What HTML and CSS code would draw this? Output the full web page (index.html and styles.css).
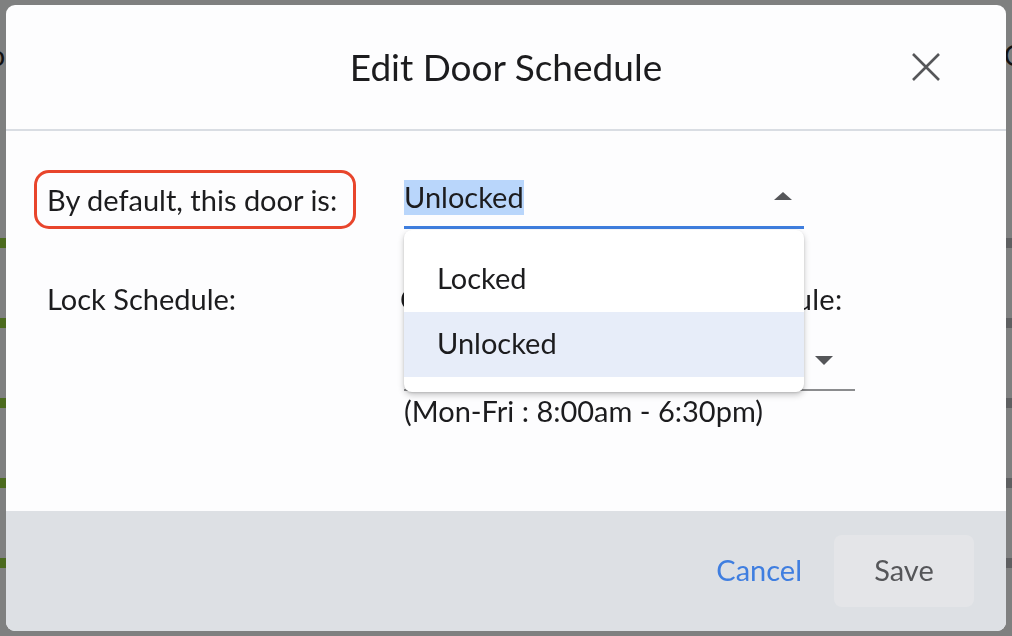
FILE: index.html
```html
<!DOCTYPE html>
<html lang="en">
<head>
<meta charset="utf-8">
<title>Edit Door Schedule</title>
<link rel="stylesheet" href="styles.css">
</head>
<body>
<div class="page">
  <div class="page-top"><span class="frag-left">Lo</span><span class="frag-right">Co</span></div>
  <div class="ticks">
    <div class="tick-row"><i class="tick tick-l"></i><i class="tick tick-r"></i></div>
    <div class="tick-row"><i class="tick tick-l"></i><i class="tick tick-r"></i></div>
    <div class="tick-row"><i class="tick tick-l"></i><i class="tick tick-r"></i></div>
    <div class="tick-row"><i class="tick tick-l"></i><i class="tick tick-r"></i></div>
    <div class="tick-row"><i class="tick tick-l"></i><i class="tick tick-r"></i></div>
  </div>
</div>
<div class="overlay">
  <div class="modal">
    <header class="modal-header">
      <div class="spacer"></div>
      <h1 class="modal-title">Edit Door Schedule</h1>
      <button class="close-btn" aria-label="Close">
        <svg viewBox="0 0 28 28" width="28" height="28"><path d="M1 1 L27 27 M27 1 L1 27" stroke="#555659" stroke-width="2.6" fill="none"/></svg>
      </button>
    </header>
    <div class="modal-body">
      <div class="form-row row-default">
        <div class="label-cell"><span class="label-highlight">By default, this door is:</span></div>
        <div class="field-cell">
          <div class="select-wrap">
            <div class="select select-open">
              <span class="select-value selected-text">Unlocked</span>
              <svg class="arrow" viewBox="0 0 18 8" width="18" height="8"><path d="M0 8 L9 0 L18 8 Z" fill="#555659"/></svg>
            </div>
            <ul class="menu">
              <li class="menu-item">Locked</li>
              <li class="menu-item active">Unlocked</li>
            </ul>
          </div>
        </div>
      </div>
      <div class="form-row row-schedule">
        <div class="label-cell"><span class="label">Lock Schedule:</span></div>
        <div class="field-cell wide">
          <div class="field-label">Choose Door Unlocking Schedule:</div>
          <div class="select select-closed">
            <span class="select-value">Business Hours</span>
            <svg class="arrow" viewBox="0 0 18 9" width="18" height="9"><path d="M0 0 L9 9 L18 0 Z" fill="#555659"/></svg>
          </div>
          <div class="helper">(Mon-Fri : 8:00am - 6:30pm)</div>
        </div>
      </div>
    </div>
    <footer class="modal-footer">
      <button class="btn-link">Cancel</button>
      <button class="btn-save">Save</button>
    </footer>
  </div>
</div>
</body>
</html>
```
FILE: styles.css
```css
* { box-sizing: border-box; }
html, body { margin: 0; padding: 0; }
body {
  width: 1012px;
  height: 636px;
  overflow: hidden;
  background: #7f8080;
  font-family: Lato, "Noto Sans", sans-serif;
  color: #1c1c1e;
}
.page {
  width: 1012px;
  height: 636px;
  display: flex;
  flex-direction: column;
}
.page-top {
  display: flex;
  justify-content: space-between;
  padding-top: 38px;
  height: 80px;
  font-size: 28px;
  color: #111;
}
.frag-left { margin-left: -24px; }
.frag-right { margin-right: -26px; }
.ticks {
  margin-top: 158px;
  display: flex;
  flex-direction: column;
  gap: 70px;
}
.tick-row {
  display: flex;
  justify-content: space-between;
  height: 10px;
}
.tick { display: block; width: 6px; height: 10px; }
.tick-l { background: #4b6a1e; }
.tick-r { background: #5e5f61; }

.overlay {
  position: fixed;
  inset: 0;
  padding: 5px 6px 5px 6px;
  display: flex;
}
.modal {
  width: 1000px;
  height: 626px;
  background: #fdfdfe;
  border-radius: 9px;
  display: flex;
  flex-direction: column;
  overflow: hidden;
}
.modal-header {
  height: 126px;
  border-bottom: 2px solid #d9dde3;
  display: grid;
  grid-template-columns: 1fr auto 1fr;
  align-items: center;
}
.modal-title {
  margin: 0 0 2px;
  font-size: 37px;
  font-weight: 400;
  color: #1c1c1e;
}
.close-btn {
  justify-self: end;
  margin-right: 66px;
  padding: 0;
  border: 0;
  background: none;
  width: 28px;
  height: 28px;
  display: flex;
}
.modal-body {
  flex: 1;
  padding: 39px 0 0 28px;
  font-size: 29px;
}
.form-row {
  display: grid;
  grid-template-columns: 370px 451px;
}
.label-highlight {
  display: inline-flex;
  align-items: center;
  height: 59px;
  width: 322px;
  border: 3px solid #e8452c;
  border-radius: 15px;
  padding-left: 10px;
  padding-bottom: 1px;
  white-space: nowrap;
}
.select-wrap { position: relative; width: 400px; }
.select {
  display: flex;
  align-items: center;
  justify-content: space-between;
}
.select-open {
  margin-top: 5px;
  height: 54px;
  padding: 5px 12px 11px 0;
  border-bottom: 3px solid #3f7ede;
}
.selected-text {
  background: #b9d6fb;
  line-height: 34px;
  height: 35px;
}
.select-open .arrow { margin-top: -4px; }
.menu {
  position: absolute;
  left: 0;
  right: 0;
  top: calc(100% + 1px);
  margin: 0;
  padding: 17px 0 15px;
  list-style: none;
  background: #fff;
  border-radius: 8px;
  box-shadow: 0 3px 6px rgba(0,0,0,0.22), 0 1px 2px rgba(0,0,0,0.12);
  z-index: 2;
}
.menu-item {
  height: 65px;
  line-height: 61px;
  padding-left: 33px;
}
.menu-item.active { background: #e7edf9; }

.row-schedule { margin-top: 54px; }
.label { display: block; padding-left: 13px; line-height: 32px; }
.field-label {
  line-height: 32px;
  white-space: nowrap;
  margin-left: -4px;
  margin-bottom: 2px;
  letter-spacing: 0.3px;
}
.select-closed {
  height: 74px;
  padding: 0 22px 0 0;
  border-bottom: 2px solid #8b8c8e;
}
.select-closed .arrow { margin-top: 14px; }
.helper {
  margin-top: 5px;
  line-height: 30px;
}

.modal-footer {
  height: 120px;
  background: #dde0e4;
  display: flex;
  align-items: center;
  justify-content: flex-end;
  padding-right: 32px;
}
.btn-link {
  border: 0;
  background: none;
  padding: 0 0 3px;
  margin-right: 32px;
  font-family: inherit;
  font-size: 29px;
  color: #3f7ee0;
}
.btn-save {
  width: 140px;
  height: 72px;
  border: 0;
  border-radius: 8px;
  background: #e4e5e8;
  padding: 0 0 3px;
  font-family: inherit;
  font-size: 29px;
  color: #555659;
}
```
